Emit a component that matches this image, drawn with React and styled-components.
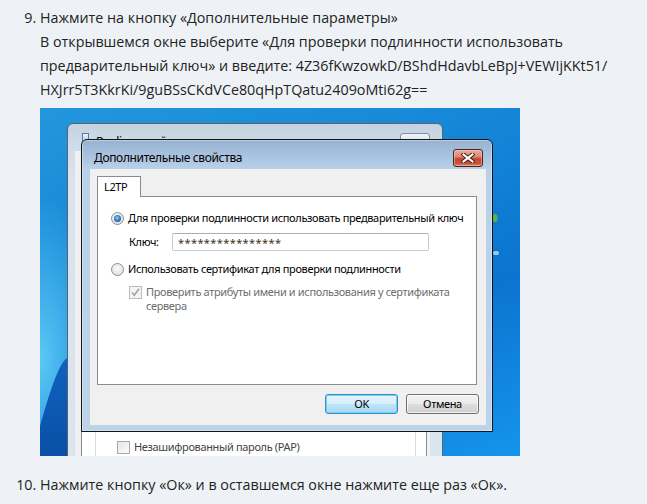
import React from "react";
import styled, { createGlobalStyle } from "styled-components";

const GlobalStyle = createGlobalStyle`
  html, body {
    margin: 0;
    padding: 0;
    background: #eef2f6;
  }
  body {
    font-family: "Open Sans", "Noto Sans", sans-serif;
    color: #222;
  }
`;

/* ---------- article ---------- */

const Steps = styled.ol`
  margin: 0;
  padding: 6px 0 0 40px;
  font-size: 14.3px;
  line-height: 24px;
`;

const Step = styled.li`
  margin: 0;
`;

/* ---------- desktop capture ---------- */

const Desktop = styled.div`
  position: relative;
  width: 480px;
  height: 348px;
  margin: 6px 0 17px;
  overflow: hidden;
  background:
    radial-gradient(ellipse 90px 220px at 0% 72%, rgba(95, 205, 248, 0.95), rgba(95, 205, 248, 0) 75%),
    linear-gradient(160deg, #2397dc 0%, #1283d6 40%, #0b74d0 65%, #1594ec 100%);
  font-family: "Noto Sans", "Open Sans", sans-serif;
  font-size: 11px;
  letter-spacing: -0.35px;
  color: #000;
  line-height: 14px;
  white-space: nowrap;
`;

const Wallpaper = styled.svg`
  position: absolute;
  left: 0;
  top: 0;
  width: 480px;
  height: 348px;
`;

/* window in the background */

const BackWindow = styled.div`
  position: absolute;
  left: 27px;
  top: 15px;
  width: 376px;
  height: 360px;
  box-sizing: border-box;
  border: 1px solid #59636e;
  border-radius: 6px 6px 0 0;
  background: linear-gradient(#c4d2df 0px, #d0dce8 22px, #dae4ee 60px, #dbe5ef 100%);
  display: flex;
  flex-direction: column;
  padding: 0 12px 0 7px;
`;

const BackTitleBar = styled.div`
  height: 30px;
  display: flex;
  align-items: flex-start;
  padding: 9px 0 0 7px;
  box-sizing: border-box;
`;

const BackIcon = styled.div`
  width: 7px;
  height: 12px;
  border: 1px solid #5e7a9c;
  background: linear-gradient(#e9f1fb, #a9c2df);
  box-sizing: border-box;
`;

const BackTitle = styled.span`
  margin-left: 7px;
  margin-top: 2px;
  font-size: 12px;
  color: #000;
`;

const BackClose = styled.div`
  margin-left: auto;
  width: 30px;
  height: 18px;
  box-sizing: border-box;
  border: 1px solid #7f8ea0;
  border-radius: 3px;
  background: linear-gradient(#eef3f8, #d3dde8);
  display: flex;
  justify-content: center;
  padding-top: 3px;
  color: #6b7888;
  font-size: 9px;
  line-height: 9px;
`;

const BackClient = styled.div`
  flex: 1;
  background: #f0f0f0;
  padding: 30px 3px 0 6px;
`;

const BackPanel = styled.div`
  background: #fff;
  border: 1px solid #898c95;
  padding: 10px 10px 0 13px;
  height: 400px;
`;

const BackBox = styled.div`
  border: 1px solid #d8dde3;
  padding: 247px 0 0 21px;
  height: 300px;
`;

const OptionRow = styled.div`
  display: flex;
  align-items: flex-start;
  gap: 4px;
  color: ${(p) => (p.$muted ? "#6d6d6d" : "#000")};
  margin-left: ${(p) => p.$indent || 0}px;
  margin-top: ${(p) => p.$top || 0}px;
`;

const PlainLabel = styled.span`
  color: #444;
`;

const CheckBox = styled.span`
  flex: none;
  width: 13px;
  height: 13px;
  box-sizing: border-box;
  border: 1px solid ${(p) => (p.$disabled ? "#bcbcbc" : "#a9a9a9")};
  background: ${(p) =>
    p.$disabled ? "#f4f4f4" : "linear-gradient(135deg, #e6e6e6, #fbfbfb)"};
  display: flex;
  align-items: center;
  justify-content: center;
  margin-top: 1px;
`;

/* active dialog */

const Dialog = styled.div`
  position: absolute;
  left: 41px;
  top: 31px;
  width: 412px;
  height: 293px;
  box-sizing: border-box;
  border: 1px solid #141414;
  border-radius: 6px 6px 0 0;
  background: linear-gradient(#96b2d1 0px, #a9c3df 16px, #b9d0e9 29px, #bcd3ea 100%);
  box-shadow: inset 0 0 0 1px rgba(255, 255, 255, 0.35);
  display: flex;
  flex-direction: column;
`;

const TitleBar = styled.div`
  height: 29px;
  box-sizing: border-box;
  padding: 9px 9px 0 12px;
  display: flex;
  align-items: flex-start;
  justify-content: space-between;
`;

const Title = styled.span`
  font-size: 12px;
  line-height: 16px;
  color: #000;
  margin-top: 1px;
`;

const CloseButton = styled.div`
  width: 30px;
  height: 18px;
  box-sizing: border-box;
  border: 1px solid #4a2420;
  border-radius: 3px;
  background: linear-gradient(#e9a99b 0%, #de8b78 40%, #c5452b 55%, #c9563b 85%, #e08a64 100%);
  box-shadow: inset 0 0 0 1px rgba(255, 220, 210, 0.45);
  display: flex;
  align-items: center;
  justify-content: center;
`;

const Client = styled.div`
  flex: 1;
  margin: 0 6px 6px 8px;
  background: #f0f0f0;
  padding: 7px 7px 10px 7px;
  display: flex;
  flex-direction: column;
`;

const TabStrip = styled.div`
  display: flex;
  position: relative;
  z-index: 1;
  margin-bottom: -1px;
`;

const Tab = styled.div`
  width: 44px;
  height: 21px;
  box-sizing: border-box;
  border: 1px solid #898c95;
  border-bottom: none;
  background: #fff;
  padding: 3px 0 0 6px;
  line-height: 14px;
`;

const TabPanel = styled.div`
  height: 189px;
  box-sizing: border-box;
  background: #fff;
  border: 1px solid #898c95;
  margin-right: 2px;
  padding: 14px 12px 0 13px;
`;

const Radio = styled.span`
  flex: none;
  width: 13px;
  height: 13px;
  box-sizing: border-box;
  border-radius: 50%;
  border: 1px solid #8c8f94;
  background: radial-gradient(circle at 50% 40%, #fbfbfb 0%, #e4e4e4 70%, #d0d0d0 100%);
  display: flex;
  align-items: center;
  justify-content: center;
  margin-top: 1px;

  &::after {
    content: "";
    display: ${(p) => (p.$checked ? "block" : "none")};
    width: 7px;
    height: 7px;
    border-radius: 50%;
    background: radial-gradient(circle at 45% 40%, #8fd8ff 0%, #3d8bd4 40%, #16508f 80%, #0e3a6c 100%);
  }
`;

const KeyRow = styled.div`
  display: flex;
  align-items: center;
  margin: 8px 0 0 18px;
`;

const KeyLabel = styled.span`
  width: 43px;
`;

const KeyInput = styled.div`
  width: 257px;
  height: 18px;
  box-sizing: border-box;
  border: 1px solid #c6cad1;
  border-top-color: #abadb3;
  border-radius: 2px;
  background: #fff;
  padding: 0 0 0 5px;
  font-size: 11px;
  line-height: 17px;
  letter-spacing: 0.4px;
  color: #3b2f24;
`;

const ButtonRow = styled.div`
  display: flex;
  justify-content: flex-end;
  gap: 8px;
  margin-top: 9px;
`;

const Button = styled.div`
  width: 73px;
  height: 20px;
  box-sizing: border-box;
  border-radius: 3px;
  border: 1px solid ${(p) => (p.$primary ? "#3c8cc5" : "#707070")};
  background: ${(p) =>
    p.$primary
      ? "linear-gradient(#e6f4fc 0%, #d7eefb 48%, #bee4f8 52%, #a9d8f5 100%)"
      : "linear-gradient(#f2f2f2 0%, #ebebeb 48%, #dddddd 52%, #cfcfcf 100%)"};
  box-shadow: ${(p) =>
    p.$primary ? "inset 0 0 0 1px #6ed0f6" : "inset 0 0 0 1px rgba(255,255,255,0.7)"};
  display: flex;
  align-items: center;
  justify-content: center;
  color: #000;
`;

const CloseGlyph = () => (
  <svg width="14" height="10" viewBox="0 0 14 10">
    <path d="M2.5 1.5 L11.5 8.5 M11.5 1.5 L2.5 8.5" stroke="#3a1a16" strokeWidth="4" strokeLinecap="square" />
    <path d="M2.5 1.5 L11.5 8.5 M11.5 1.5 L2.5 8.5" stroke="#fff" strokeWidth="2.2" strokeLinecap="square" />
  </svg>
);

const CheckMark = () => (
  <svg width="11" height="11" viewBox="0 0 11 11">
    <path d="M2 5.5 L4.3 8.2 L9 1.8" fill="none" stroke="#a3a3a3" strokeWidth="1.6" />
  </svg>
);

export default function App() {
  return (
    <>
      <GlobalStyle />
      <Steps start={9}>
        <Step>
          Нажмите на кнопку «Дополнительные параметры»
          <br />
          В открывшемся окне выберите «Для проверки подлинности использовать
          <br />
          предварительный ключ» и введите: 4Z36fKwzowkD/BShdHdavbLeBpJ+VEWIjKKt51/
          <br />
          HXJrr5T3KkrKi/9guBSsCKdVCe80qHpTQatu2409oMti62g==
          <Desktop>
            <Wallpaper viewBox="0 0 480 348">
              <defs>
                <linearGradient id="wave" x1="0" y1="0" x2="0" y2="1">
                  <stop offset="0" stopColor="#0d63bf" />
                  <stop offset="1" stopColor="#0a4fa6" />
                </linearGradient>
              </defs>
              <path d="M27 250 C18 256 8 290 0 318 L0 348 L27 348 Z" fill="url(#wave)" />
              <ellipse cx="455" cy="110" rx="2.5" ry="4" fill="#5fb04a" />
              <ellipse cx="456" cy="145" rx="3" ry="2" fill="#d8eefb" opacity="0.7" />
            </Wallpaper>

            <BackWindow>
              <BackTitleBar>
                <BackIcon />
                <BackTitle>Beeline: свойства</BackTitle>
                <BackClose>▭▭</BackClose>
              </BackTitleBar>
              <BackClient>
                <BackPanel>
                  <BackBox>
                    <OptionRow>
                      <CheckBox />
                      <PlainLabel>Незашифрованный пароль (PAP)</PlainLabel>
                    </OptionRow>
                  </BackBox>
                </BackPanel>
              </BackClient>
            </BackWindow>

            <Dialog>
              <TitleBar>
                <Title>Дополнительные свойства</Title>
                <CloseButton>
                  <CloseGlyph />
                </CloseButton>
              </TitleBar>
              <Client>
                <TabStrip>
                  <Tab>L2TP</Tab>
                </TabStrip>
                <TabPanel>
                  <OptionRow>
                    <Radio $checked />
                    <span>Для проверки подлинности использовать предварительный ключ</span>
                  </OptionRow>
                  <KeyRow>
                    <KeyLabel>Ключ:</KeyLabel>
                    <KeyInput>****************</KeyInput>
                  </KeyRow>
                  <OptionRow $top={11}>
                    <Radio />
                    <span>Использовать сертификат для проверки подлинности</span>
                  </OptionRow>
                  <OptionRow $muted $indent={18} $top={9}>
                    <CheckBox $disabled>
                      <CheckMark />
                    </CheckBox>
                    <span>
                      Проверить атрибуты имени и использования у сертификата
                      <br />
                      сервера
                    </span>
                  </OptionRow>
                </TabPanel>
                <ButtonRow>
                  <Button $primary>OK</Button>
                  <Button>Отмена</Button>
                </ButtonRow>
              </Client>
            </Dialog>
          </Desktop>
        </Step>
        <Step>Нажмите кнопку «Ок» и в оставшемся окне нажмите еще раз «Ок».</Step>
      </Steps>
    </>
  );
}
